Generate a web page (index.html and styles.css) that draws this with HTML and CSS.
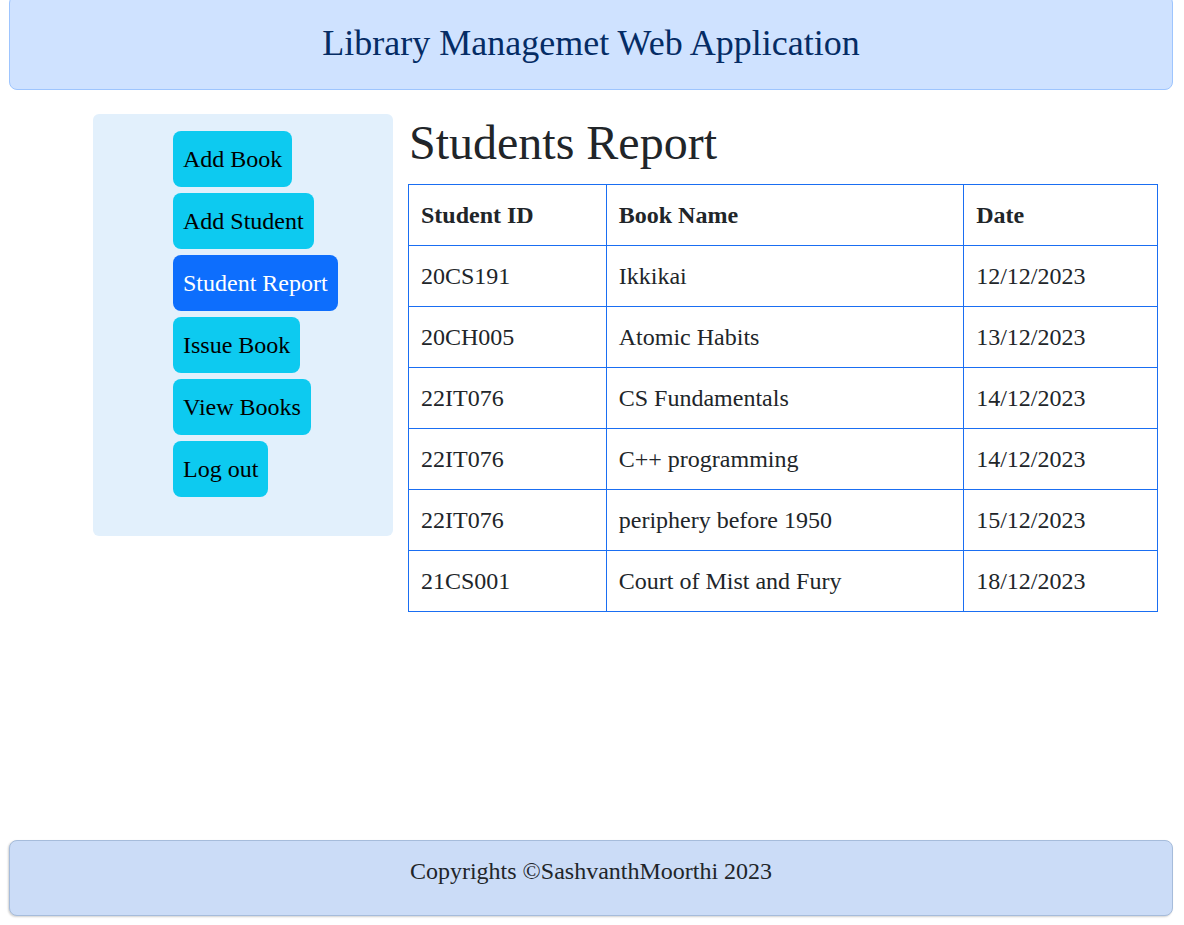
FILE: index.html
```html
<!DOCTYPE html>
<html lang="en">
<head>
<meta charset="utf-8">
<title>Library Management</title>
<link rel="stylesheet" href="styles.css">
</head>
<body>
<header class="top-bar">
  <h2 class="top-title">Library Managemet Web Application</h2>
</header>
<div class="layout">
  <nav class="sidebar">
    <a class="nav-btn">Add Book</a>
    <a class="nav-btn">Add Student</a>
    <a class="nav-btn active">Student Report</a>
    <a class="nav-btn">Issue Book</a>
    <a class="nav-btn">View Books</a>
    <a class="nav-btn">Log out</a>
  </nav>
  <main class="content">
    <h1 class="page-title">Students Report</h1>
    <table class="report">
      <thead>
        <tr><th class="c1">Student ID</th><th class="c2">Book Name</th><th class="c3">Date</th></tr>
      </thead>
      <tbody>
        <tr><td>20CS191</td><td>Ikkikai</td><td>12/12/2023</td></tr>
        <tr><td>20CH005</td><td>Atomic Habits</td><td>13/12/2023</td></tr>
        <tr><td>22IT076</td><td>CS Fundamentals</td><td>14/12/2023</td></tr>
        <tr><td>22IT076</td><td>C++ programming</td><td>14/12/2023</td></tr>
        <tr><td>22IT076</td><td>periphery before 1950</td><td>15/12/2023</td></tr>
        <tr><td>21CS001</td><td>Court of Mist and Fury</td><td>18/12/2023</td></tr>
      </tbody>
    </table>
  </main>
</div>
<footer class="bottom-bar">
  <h4 class="foot-text">Copyrights ©SashvanthMoorthi 2023</h4>
</footer>
</body>
</html>
```
FILE: styles.css
```css
* { box-sizing: border-box; }
html, body { margin: 0; padding: 0; }
body {
  font-family: "Liberation Serif", "Times New Roman", serif;
  color: #212529;
  background: #fff;
  height: 925px;
  overflow: hidden;
  display: flex;
  flex-direction: column;
}
.top-bar {
  margin: -5px 11px 0 9px;
  height: 95px;
  background: #cfe2ff;
  border: 1px solid #9ec5fe;
  border-radius: 8px;
  display: flex;
  align-items: center;
  justify-content: center;
  padding-top: 2px;
}
.top-title {
  margin: 0;
  font-weight: 400;
  font-size: 36px;
  line-height: 43px;
  color: #052c65;
}
.layout {
  display: flex;
  gap: 15px;
  margin-top: 24px;
  padding-left: 93px;
  flex: 1;
  align-items: flex-start;
}
.sidebar {
  width: 300px;
  height: 422px;
  background: #e2f0fc;
  border-radius: 6px;
  padding: 17px 0 0 80px;
  display: flex;
  flex-direction: column;
  align-items: flex-start;
  gap: 6px;
}
.nav-btn {
  display: inline-block;
  background: #0dcaf0;
  color: #000;
  font-size: 24px;
  line-height: 36px;
  padding: 10px 10px;
  border-radius: 8px;
  cursor: pointer;
}
.nav-btn.active {
  background: #0d6efd;
  color: #fff;
}
.content {
  width: 750px;
}
.page-title {
  margin: 1px 0 13px 1px;
  font-weight: 400;
  font-size: 48px;
  line-height: 56px;
}
.report {
  width: 750px;
  border-collapse: collapse;
  font-size: 24px;
}
.report th, .report td {
  border: 1px solid #1a6ef2;
  padding: 12px 12px;
  line-height: 36px;
  text-align: left;
  vertical-align: middle;
}
.report th { font-weight: 700; }
.c1 { width: 198px; }
.c2 { width: 358px; }
.c3 { width: 194px; }
.bottom-bar {
  margin: 0 11px 9px 9px;
  height: 76px;
  background: #cbdcf7;
  border: 1px solid #a6bcdb;
  border-radius: 8px;
  box-shadow: -1px 1px 2px rgba(0, 0, 0, 0.18);
  display: flex;
  justify-content: center;
  padding-top: 12px;
}
.foot-text {
  margin: 0;
  font-weight: 400;
  font-size: 24px;
  line-height: 36px;
  color: #212529;
}
```
